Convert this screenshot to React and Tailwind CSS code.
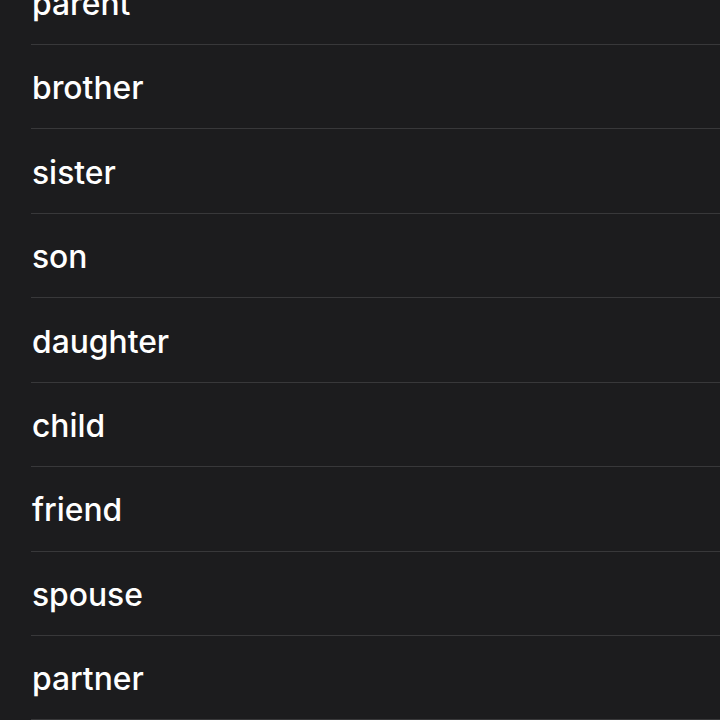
const items = ['parent', 'brother', 'sister', 'son', 'daughter', 'child', 'friend', 'spouse', 'partner'];

export default function App() {
  return (
    <div className="h-[720px] w-[720px] overflow-hidden bg-[#1c1c1e]" style={{ fontFamily: 'Inter, "Noto Sans", sans-serif' }}>
      <ul className="-mt-[39.43px] pl-[31px]">
        {items.map(label => (
          <li key={label} className="flex h-[84.43px] items-center border-b border-[#38383a] pl-px pt-[3px]">
            <span className="text-[31.8px] font-[550] leading-none text-white">{label}</span>
          </li>
        ))}
      </ul>
    </div>
  );
}
